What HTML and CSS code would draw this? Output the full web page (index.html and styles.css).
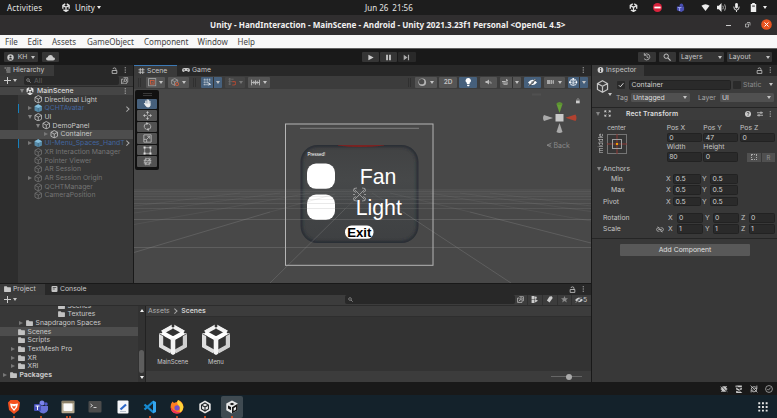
FILE: index.html
```html
<!DOCTYPE html>
<html lang="en">
<head>
<meta charset="utf-8">
<title>Unity - HandInteraction</title>
<link rel="stylesheet" href="styles.css">
</head>
<body>
<svg class="defs" width="0" height="0">
  <symbol id="cube" viewBox="0 0 16 16"><path d="M8 1l6.2 3.3v7.4L8 15l-6.200-3.300V4.300zM1.800 4.300L8 7.700l6.200-3.400M8 7.700V15" fill="none" stroke="currentColor" stroke-width="1.500"/></symbol>
  <symbol id="prefab" viewBox="0 0 16 16"><path d="M8 .5l7 3.500v8L8 15.500 1 12V4z" fill="#568aa8"/><path d="M8 .5l7 3.500-7 3.500L1 4z" fill="#86bfdc"/><path d="M8 7.500V15.500" stroke="#315469"/></symbol>
  <symbol id="unity" viewBox="0 0 28 31"><path d="M11.500 2.800L3 7.900V20M16.500 2.800L25 7.900V20M5 24l9 5 9-5M4 9l10 6 10-6M14 15v13" fill="none" stroke="currentColor" stroke-width="4.600"/></symbol>
  <symbol id="unitybig" viewBox="0 0 28 31">
    <clipPath id="hex"><path d="M14 0l14 7.750v15.500L14 31 0 23.250V7.750z"/></clipPath>
    <g clip-path="url(#hex)" fill="none" stroke-width="4.200">
      <path d="M2.100 9V22.200L12 27.900" stroke="#dedede"/>
      <path d="M25.900 9V22.200L16 27.900" stroke="#cfcfcf"/>
      <path d="M11.600 0V3.400L3 8.200M16.400 0V3.400L25 8.200" stroke="#f2f2f2"/>
      <path d="M3.500 8.800L14 14.700l10.500-5.900" stroke="#fff"/>
      <path d="M14 14V31" stroke="#f4f4f4" stroke-width="4.600"/>
      <path d="M0 9.500l5.500 3.200M28 9.500l-5.500 3.200" stroke="#333" stroke-width=".7"/>
    </g>
    <path d="M12.700 0h2.600v3h-2.600z" fill="#333"/>
  </symbol>
  <symbol id="folder" viewBox="0 0 16 14"><path fill="currentColor" d="M0 1.500Q0 .5 1 .5h5l2 2.300h7q1 0 1 1V13q0 .8-1 .8H1q-1 0-1-.8z"/></symbol>
  <symbol id="lock" viewBox="0 0 12 12"><path d="M2 6h8v5H2zM3.500 3.500q0-2 2.500-2T8.500 4v2" fill="none" stroke="currentColor" stroke-width="1.400"/></symbol>
  <symbol id="dots" viewBox="0 0 4 12"><path fill="currentColor" d="M1 .5h2v2H1zM1 5h2v2H1zM1 9.500h2v2H1z"/></symbol>
  <symbol id="search" viewBox="0 0 12 12"><circle cx="4.800" cy="4.800" r="3.300" fill="none" stroke="currentColor" stroke-width="1.400"/><path d="M7.300 7.300l4 4" stroke="currentColor" stroke-width="1.700"/></symbol>
  <symbol id="popout" viewBox="0 0 12 12"><path d="M4 1.200H11v7H8.500M3.500 3.500H1v7.500h7.500V9" fill="none" stroke="currentColor" stroke-width="1.200"/><circle cx="7" cy="5" r="2" fill="none" stroke="currentColor" stroke-width="1.200"/><path d="M5.500 6.500L3 9" stroke="currentColor" stroke-width="1.300"/></symbol>
  <symbol id="lines" viewBox="0 0 12 12"><path d="M0 2h3M4 2h8M3 6h9M4 10h8" stroke="currentColor" stroke-width="1.500"/></symbol>
  <symbol id="hash" viewBox="0 0 12 12"><path d="M3.500 0v12M8.500 0v12M0 3.500h12M0 8.500h12" stroke="currentColor" stroke-width="1.700"/></symbol>
  <symbol id="pad" viewBox="0 0 16 10"><path fill="currentColor" d="M4.500 1h7Q16 1 16 5.500 15.500 9 13 9q-1.500 0-2.500-2h-5Q4.500 9 3 9 .5 9 0 5.500 0 1 4.500 1z"/><path d="M3 4.500h3M4.500 3v3" stroke="#282828"/><circle cx="11.500" cy="4.500" r="1.200" fill="#282828"/></symbol>
  <symbol id="pivot" viewBox="0 0 14 14"><rect x="1" y="1" width="12" height="12" fill="none" stroke="#aaa" stroke-width="1.400"/><rect x="4" y="4" width="6" height="6" fill="none" stroke="#d25c3d" stroke-width="1.400"/><circle cx="7" cy="7" r="1" fill="#d25c3d"/></symbol>
  <symbol id="local" viewBox="0 0 14 14"><path d="M6 1l5 2.500v6L6 12 1 9.500v-6zM1 3.500L6 6l5-2.500M6 6v6" fill="none" stroke="#aaa" stroke-width="1.200"/><circle cx="10" cy="10" r="2.600" fill="#585858" stroke="#d25c3d" stroke-width="1.500"/></symbol>
  <symbol id="gridsnap" viewBox="0 0 14 14"><path d="M1 3h12M1 7h8M1 11h6M3 1v12M7 1v12M11 1v5" stroke="#d5dce3" stroke-width="1.200" stroke-dasharray="2 1"/><path d="M9 7v6l2-2h3z" fill="#e5e9ed"/></symbol>
  <symbol id="magnet" viewBox="0 0 14 14"><path d="M1 2h8M1 6h5M1 10h4M3 0v12" stroke="#858585" stroke-width="1.200" stroke-dasharray="2 1"/><path d="M7 6h3q3 0 3 2.500T10 11.500H7" fill="none" stroke="#ac4934" stroke-width="1.800"/></symbol>
  <symbol id="ruler" viewBox="0 0 16 12"><path d="M1 1v10M15 1v10M1 6h14M5 3v6M8 2v8M11 3v6" stroke="#bbb" stroke-width="1.700"/></symbol>
  <symbol id="ball" viewBox="0 0 14 14"><circle cx="7" cy="7" r="6.300" fill="#b4b4b4"/><circle cx="6" cy="6" r="4.400" fill="#4b4b4b"/></symbol>
  <symbol id="bulb" viewBox="0 0 12 14"><path fill="#fff" d="M6 0a4.300 4.300 0 0 1 2.300 8v2H3.700V8A4.300 4.300 0 0 1 6 0zM4 11h4v1.500L7 14H5l-1-1.500z"/></symbol>
  <symbol id="mute" viewBox="0 0 14 12"><path fill="#bbb" d="M1 4h3l4-3v10L4 8H1z"/><path d="M10 4v4M12 6v4" stroke="#bbb" stroke-width="1.300"/></symbol>
  <symbol id="fx" viewBox="0 0 14 12"><path d="M0 5h7l5-3M1 8h11M3 10.500h8M9 0l1 5" fill="none" stroke="#bbb" stroke-width="2"/></symbol>
  <symbol id="eyeoff" viewBox="0 0 16 12"><path d="M0 6q8-10 16 0-8 9-16 0z" fill="currentColor"/><circle cx="8" cy="6" r="2.200" fill="#46607c"/><path d="M2 12L14 0" stroke="#333" stroke-width="2.400"/><path d="M1.500 11.500L13.500-.5" stroke="currentColor" stroke-width="1.200"/></symbol>
  <symbol id="cam" viewBox="0 0 14 10"><path fill="#aaa" d="M0 1h7v8H0zM8 1h2v8H8zM11 2l3-1v8l-3-1z"/></symbol>
  <symbol id="globe" viewBox="0 0 14 14"><circle cx="7" cy="7" r="5.500" fill="none" stroke="#dde4ea" stroke-width="1.200"/><path d="M1 7h12M7 1v12M3 3q4 4 8 0M3 11q4-4 8 0" fill="none" stroke="#dde4ea" stroke-width="1.200"/><circle cx="7" cy="1.500" r="1.500" fill="#fff"/><circle cx="1.500" cy="7" r="1.500" fill="#fff"/><circle cx="12.500" cy="7" r="1.500" fill="#fff"/></symbol>
  <symbol id="hand" viewBox="0 0 16 16"><path d="M5 9V3.500M7.500 8V1.500M10 8V2M12.300 9V4M5 11L2.500 8" stroke="#eee" stroke-width="1.900" stroke-linecap="round"/><path fill="#eee" d="M4 8h9.300v3.500Q12.500 15 9 15q-3 0-4.500-3z"/></symbol>
  <symbol id="move" viewBox="0 0 16 16"><path fill="#c4c4c4" d="M8 0l2.500 3.500h-5zM8 16l2.500-3.500h-5zM0 8l3.500-2.500v5zM16 8l-3.500-2.500v5z"/><path d="M8 3v3.500M8 9.500V13M3 8h3.500M9.500 8H13" stroke="#c4c4c4" stroke-width="1.300"/></symbol>
  <symbol id="rotate" viewBox="0 0 16 16"><path d="M2.500 10Q1 4 7 2.500M13.500 6Q15 12 9 13.500M10 3q2 .5 3 2.500M6 13q-2-.5-3-2.500" fill="none" stroke="#c4c4c4" stroke-width="1.500"/><path d="M6 0l4 3-4 2.500zM10 16l-4-3 4-2.500z" fill="#c4c4c4"/></symbol>
  <symbol id="scale" viewBox="0 0 16 16"><path d="M1.500 1.500h13v13h-13zM1.500 9.500h5v5M7 9l4.500-4.500M7.500 4H12v4.500" fill="none" stroke="#c4c4c4" stroke-width="1.400"/></symbol>
  <symbol id="rect" viewBox="0 0 16 16"><path d="M3 3h10v10H3z" fill="none" stroke="#c4c4c4" stroke-width="1.200"/><path fill="#ddd" d="M1 1h3.500v3.500H1zM11.500 1H15v3.500h-3.500zM1 11.500h3.500V15H1zM11.500 11.500H15V15h-3.500z"/></symbol>
  <symbol id="trans" viewBox="0 0 16 16"><circle cx="8" cy="8" r="5.500" fill="none" stroke="#c4c4c4" stroke-width="1.300"/><path d="M5 1v14M11 1v14M1 6h14M1 10.500h14M3 14L14 2" stroke="#c4c4c4" stroke-width="1.100"/></symbol>
  <symbol id="star" viewBox="0 0 12 12"><path fill="#888" d="M6 0l1.700 4H12L8.700 6.800 10 11.300 6 8.700l-4 2.600 1.300-4.500L0 4h4.300z"/></symbol>
  <symbol id="tag" viewBox="0 0 12 12"><path fill="#ccc" d="M6 1l4-.5 1.500 3L6 11 1.500 7.500z"/></symbol>
  <symbol id="types" viewBox="0 0 12 12"><path fill="#ccc" d="M1 0h5v5H1zM1 6h5v6H1z"/><circle cx="8" cy="3" r="2" fill="#ccc"/><path fill="#ccc" d="M7 5l5 3-5 3z"/></symbol>
  <symbol id="bug" viewBox="0 0 14 14"><path fill="#c8c8c8" d="M4 2h6l2 5-2 5H4L2 7z"/><path d="M1 3l12 9M1 7h12M2 12l3-3M12 2l-3 3" stroke="#c8c8c8" stroke-width="1.400"/><path d="M2 1l11 12" stroke="#191919" stroke-width="1.200"/></symbol>
  <symbol id="layers" viewBox="0 0 14 14"><path fill="#c8c8c8" d="M1 1h11v3H1zM2 5l5 2 5-2v3L7 10 2 8zM2 10l5 2 2-1 4 3H2z"/><path d="M2 1l11 12" stroke="#191919" stroke-width="1.200"/></symbol>
  <symbol id="nosync" viewBox="0 0 14 14"><path d="M2 8q0-5 5-5 3 0 4 2M12 6q0 6-5 6-3 0-4-2M8 6l4 0 0-5M6 9H2v4" fill="none" stroke="#c8c8c8" stroke-width="1.500"/><path d="M1 1l12 12" stroke="#c8c8c8" stroke-width="1.400"/></symbol>
  <symbol id="okring" viewBox="0 0 14 14"><circle cx="7" cy="7" r="6" fill="none" stroke="#bbb" stroke-width="1.300"/><path d="M4 7l2 2 4-4.500" fill="none" stroke="#bbb" stroke-width="1.400"/></symbol>
</svg>

<header class="topbar">
  <span class="activities">Activities</span>
  <svg class="ti u1"><use href="#unity"/></svg><span class="appname">Unity</span><i class="caret white"></i>
  <span class="clock">Jun 26&ensp;21:56</span>
  <div class="tray">
    <svg><use href="#unity"/></svg>
    <svg viewBox="0 0 10 10"><circle cx="5" cy="5" r="5" fill="#d9223c"/><path d="M1.500 5h7" stroke="#fff" stroke-width="2"/></svg>
    <svg viewBox="0 0 10 10"><circle cx="6" cy="2.500" r="2" fill="#4a50b4"/><path d="M1 4h8v4L6 10 1 8z" fill="#4a50b4"/><path d="M2 5h4M4 5v4" stroke="#9ca2ee" stroke-width="1.200"/></svg>
    <svg viewBox="0 0 10 10"><path fill="#eee" d="M.5 3Q5-.5 9.500 3L5 9z"/></svg>
    <svg viewBox="0 0 10 10"><path fill="#eee" d="M0 3h2l3-3v10L2 7H0z"/><path d="M6.500 3q1 2 0 4M8.500 1.500q2 3.500 0 7" fill="none" stroke="#bbb"/></svg>
    <svg viewBox="0 0 10 10"><rect x="3.500" width="3" height="6" rx="1.500" fill="#eee"/><path d="M2 4q0 4 3 4t3-4M5 8v2" fill="none" stroke="#eee"/></svg>
    <svg viewBox="0 0 10 10"><path fill="#eee" d="M3.500 0h3v1H8v9H2V1h1.500z"/><path d="M3.500 2.500h3v2h-3z" fill="#777"/></svg>
    <i class="caret white"></i>
  </div>
</header>

<div class="titlebar">
  <span class="title">Unity - HandInteraction - MainScene - Android - Unity 2021.3.23f1 Personal &lt;OpenGL 4.5&gt;</span>
  <svg class="winbtns" viewBox="0 0 52 14"><path d="M1 7.500h5" stroke="#ccc"/><path d="M20.500 6h3v3h-3zM22 4.500h3v3" fill="none" stroke="#bbb" stroke-width=".8"/><circle cx="41.500" cy="6.500" r="5.300" fill="#e95420"/><path d="M39.500 4.500l4 4M43.500 4.500l-4 4" stroke="#fff"/></svg>
</div>

<nav class="menubar"><span>File</span><span>Edit</span><span>Assets</span><span>GameObject</span><span>Component</span><span>Window</span><span>Help</span></nav>

<div class="toolbar">
  <div class="tb account"><svg viewBox="0 0 12 12"><circle cx="6" cy="6" r="5.500" fill="#ccc"/><circle cx="6" cy="4.300" r="1.800" fill="#333"/><path d="M2.700 9.500q3.300-5 6.600 0z" fill="#333"/></svg><span>KH</span><i class="caret"></i></div>
  <div class="tb cloud"><svg viewBox="0 0 14 10"><path fill="#ccc" d="M3 9.500Q0 9.300 0 7t2.500-2.500Q3.500 1 7 1t4 3.500q3 0 3 2.500t-3 2.500z"/></svg></div>
  <div class="play"><div class="tb"><svg viewBox="0 0 10 10"><path fill="#ccc" d="M2 1l7.500 4L2 9z"/></svg></div><div class="tb"><svg viewBox="0 0 10 10"><path fill="#bbb" d="M1.500 1h2.800v8H1.500zM5.700 1h2.800v8H5.700z"/></svg></div><div class="tb dim"><svg viewBox="0 0 10 10"><path fill="#aaa" d="M1 1l5.500 4L1 9zM7 1h1.700v8H7z"/></svg></div></div>
  <div class="tbright">
    <div class="tb ic"><svg viewBox="0 0 12 12"><path d="M2 3q3-3.500 7-.5 3 4-.5 7-4 2.500-7-1M2 0v3.500h3M6 3.500v3l2.500 1" fill="none" stroke="#bbb" stroke-width="1.200"/></svg></div>
    <div class="tb ic"><svg class="g"><use href="#search"/></svg></div>
    <div class="tb drop">Layers<i class="caret"></i></div>
    <div class="tb drop">Layout<i class="caret"></i></div>
  </div>
</div>

<main class="workspace">
  <div class="left">
    <div class="upper">
      <section class="hierarchy">
        <div class="tabs"><div class="tab"><svg><use href="#lines"/></svg>Hierarchy</div><div class="tabend"><svg class="lk"><use href="#lock"/></svg><svg class="dt"><use href="#dots"/></svg></div></div>
        <div class="subbar"><b class="plus"></b><i class="caret"></i><div class="search"><svg><use href="#search"/></svg>All</div><svg class="po"><use href="#popout"/></svg></div>
        <div class="tree">
          <div class="row main l0"><i class="open"></i><svg class="un"><use href="#unity"/></svg><span class="semi">MainScene</span><svg class="dt end"><use href="#dots"/></svg></div>
          <div class="row l1"><i></i><svg><use href="#cube"/></svg><span>Directional Light</span></div>
          <div class="row l1 blue"><i class="closed"></i><svg><use href="#prefab"/></svg><span>QCHTAvatar</span><em class="chev"></em></div>
          <div class="row l1"><i class="open"></i><svg><use href="#cube"/></svg><span>UI</span></div>
          <div class="row l2"><i class="open"></i><svg><use href="#cube"/></svg><span>DemoPanel</span></div>
          <div class="row l3 sel"><i class="closed"></i><svg><use href="#cube"/></svg><span>Container</span></div>
          <div class="row l1 blue"><i class="closed"></i><svg><use href="#prefab"/></svg><span>UI-Menu_Spaces_HandT</span><em class="chev"></em></div>
          <div class="row l1 off"><i></i><svg><use href="#cube"/></svg><span>XR Interaction Manager</span></div>
          <div class="row l1 off"><i></i><svg><use href="#cube"/></svg><span>Pointer Viewer</span></div>
          <div class="row l1 off"><i></i><svg><use href="#cube"/></svg><span>AR Session</span></div>
          <div class="row l1 off"><i class="closed"></i><svg><use href="#cube"/></svg><span>AR Session Origin</span></div>
          <div class="row l1 off"><i></i><svg><use href="#cube"/></svg><span>QCHTManager</span></div>
          <div class="row l1 off"><i></i><svg><use href="#cube"/></svg><span>CameraPosition</span></div>
        </div>
      </section>
      <section class="scene">
        <div class="tabs"><div class="tab active"><svg><use href="#hash"/></svg>Scene</div><div class="tab plain"><svg class="wide"><use href="#pad"/></svg>Game</div><div class="tabend"><svg class="dt"><use href="#dots"/></svg></div></div>
        <div class="scenebar">
          <div class="tools">
            <u class="grip"></u>
            <div class="sb w19"><svg><use href="#pivot"/></svg><i class="caret"></i></div>
            <div class="sb w21"><svg><use href="#local"/></svg><i class="caret"></i></div>
            <u class="grip"></u>
            <div class="sb on w21"><svg><use href="#gridsnap"/></svg><s></s><i class="caret"></i></div>
            <div class="sb w20 faint"><svg><use href="#magnet"/></svg><i class="caret"></i></div>
            <div class="sb w22"><svg class="wd"><use href="#ruler"/></svg><i class="caret"></i></div>
          </div>
          <div class="tools tight">
            <u class="grip"></u>
            <div class="sb w22"><svg><use href="#ball"/></svg><i class="caret"></i></div>
            <div class="sb w18 two">2D</div>
            <div class="sb on w18"><svg><use href="#bulb"/></svg></div>
            <div class="sb w18"><svg class="sm"><use href="#mute"/></svg></div>
            <div class="sb w21"><svg class="sm"><use href="#fx"/></svg><s></s><i class="caret"></i></div>
            <div class="sb on w18 white"><svg class="wd"><use href="#eyeoff"/></svg></div>
            <div class="sb w21"><svg class="sm"><use href="#cam"/></svg><i class="caret"></i></div>
            <div class="sb on w20"><svg><use href="#globe"/></svg><s></s><i class="caret"></i></div>
          </div>
        </div>
        <div class="viewport">
          <svg class="view" viewBox="134 89 457 194">
            <defs>
              <linearGradient id="hz" x1="0" y1="0" x2="0" y2="1"><stop offset="0" stop-color="#fff" stop-opacity=".04"/><stop offset="1" stop-color="#fff" stop-opacity="0"/></linearGradient>
              <linearGradient id="pn" x1="0" y1="0" x2="0" y2="1"><stop offset="0" stop-color="#414243"/><stop offset=".35" stop-color="#464849"/><stop offset="1" stop-color="#3e4042"/></linearGradient>
              <filter id="soft" x="-10%" y="-10%" width="120%" height="120%"><feGaussianBlur stdDeviation="1.500"/></filter>
              <filter id="glow" x="-10%" y="-200%" width="120%" height="500%"><feGaussianBlur stdDeviation=".7"/></filter>
              <clipPath id="pc"><rect x="300.500" y="145" width="118" height="98" rx="17"/></clipPath>
            </defs>
            <g clip-path="url(#pc)">
              <rect x="300.500" y="145" width="118" height="98" fill="url(#pn)"/>
              <rect x="300.500" y="145" width="118" height="98" rx="17" fill="none" stroke="#262a33" stroke-width="4" filter="url(#soft)"/>
              <path d="M338 144.500q21 3 46 0" fill="none" stroke="#7a2320" stroke-width="1.800" filter="url(#glow)"/>
            </g>
            <rect x="307" y="163.500" width="28" height="25.300" rx="9" fill="#fff"/>
            <rect x="307" y="194.500" width="28" height="25.500" rx="9" fill="#fff"/>
            <rect x="345" y="225.500" width="28.500" height="13.300" rx="6.500" fill="#fff"/>
            <rect x="134" y="189" width="457" height="22" fill="url(#hz)"/>
            <g fill="none" stroke="#8f8f8f" stroke-opacity=".18" stroke-width=".8">
              <path d="M134 191.500h457M134 194h457M134 196.500h457M134 199.500h457"/>
              <path stroke-opacity=".25" d="M134 203.500h457M134 208.500h457"/>
              <path stroke-opacity=".4" d="M134 219.500h457M134 247.500h457"/>
              <path stroke-opacity=".4" d="M270 283L345 209M511 283L403 212M134 252.500L270 212M591 243L470 212"/>
              <path d="M345 209L362 193M403 212L372 193M270 212L335 194M470 212L390 193M134 224.500L310 193M591 221L430 193M134 213L280 193M591 211.500L460 193M134 206L240 193M591 206L490 193"/>
            </g>
            <rect x="285.500" y="124" width="147.500" height="141.300" fill="none" stroke="#b5b5b5"/>
            <path d="M300 128.300h119" stroke="#858585" stroke-width=".9"/>
            <g class="uitext"><text x="307.500" y="156" class="pressed">Pressed!</text><text x="359.700" y="184" class="big">Fan</text><text x="355.700" y="215" class="big">Light</text><text x="347.200" y="236.500" class="exit">Exit</text></g>
            <g fill="none" stroke="#aaa" stroke-width=".8"><path d="M354.500 189.500l10 10M364.500 189.500l-10 10M353 194.500h2M364 194.500h2M357 188l-3 .5-.5 2.500 2.500 1.500M362 188l3 .5.5 2.500-2.500 1.500M357 201l-3-.5-.5-2.500 2.500-1.500M362 201l3-.5.5-2.500-2.500-1.500"/></g>
            <path fill="#669f37" d="M556.500 104q3-3.500 6 0l-3 9z"/><ellipse cx="559.500" cy="103.800" rx="3" ry="1.300" fill="#5b9130"/>
            <path fill="#aaa" d="M544 115q-2 3 0 6l9-3z"/><path fill="#b24230" d="M575.500 114.500q2 3.500 0 6.500l-10-3.300z"/><path fill="#aaa" d="M556.500 132q3 2 6 0l-3-9z"/><path fill="#c9c9c9" d="M555.500 114h8v7.500h-8z"/>
            <path fill="#ccc" d="M576 100.500h3.700v2.800H576z"/><path d="M576.800 100.500q0-2 1.200-2t1.200 2" fill="none" stroke="#aaa" stroke-width=".6"/>
            <path d="M551.500 143l-4.500 2.200 4.500 2.200M547 145.200h4" fill="none" stroke="#8a8a8a" stroke-width=".8"/>
            <text x="553.500" y="147.800" class="back">Back</text>
            <path d="M532 94.500h9" stroke="#505050" stroke-width="2"/>
          </svg>
          <div class="palette"><b></b><div class="pt on"><svg><use href="#hand"/></svg></div><div class="pt"><svg><use href="#move"/></svg></div><div class="pt"><svg><use href="#rotate"/></svg></div><div class="pt"><svg><use href="#scale"/></svg></div><div class="pt"><svg><use href="#rect"/></svg></div><div class="pt"><svg><use href="#trans"/></svg></div></div>
        </div>
      </section>
    </div>
    <section class="project">
      <div class="tabs"><div class="tab"><svg><use href="#folder"/></svg>Project</div><div class="tab plain con"><svg viewBox="0 0 12 12"><rect width="12" height="12" rx="2" fill="#c4c4c4"/><path d="M2.500 3h7M2.500 6h4" stroke="#333" stroke-width="1.400"/></svg>Console</div><div class="tabend"><svg class="lk"><use href="#lock"/></svg><svg class="dt"><use href="#dots"/></svg></div></div>
      <div class="subbar"><b class="plus"></b><i class="caret"></i><div class="search psearch"><svg><use href="#search"/></svg></div>
        <div class="filters"><div><svg><use href="#popout"/></svg></div><div><svg><use href="#types"/></svg></div><div><svg><use href="#tag"/></svg></div><div><svg><use href="#star"/></svg></div><div class="hid"><svg class="wd"><use href="#eyeoff"/></svg>5</div></div></div>
      <div class="pbody">
        <div class="ptree">
          <div class="row p6 cut"><i></i><svg><use href="#folder"/></svg><span>Scenes</span></div>
          <div class="row p6"><i></i><svg><use href="#folder"/></svg><span>Textures</span></div>
          <div class="row p2"><i class="closed"></i><svg><use href="#folder"/></svg><span>Snapdragon Spaces</span></div>
          <div class="row p1 sel"><i></i><svg><use href="#folder"/></svg><span>Scenes</span></div>
          <div class="row p1"><i></i><svg><use href="#folder"/></svg><span>Scripts</span></div>
          <div class="row p1"><i class="closed"></i><svg><use href="#folder"/></svg><span>TextMesh Pro</span></div>
          <div class="row p1"><i class="closed"></i><svg><use href="#folder"/></svg><span>XR</span></div>
          <div class="row p1"><i class="closed"></i><svg><use href="#folder"/></svg><span>XRI</span></div>
          <div class="row p0"><i class="closed"></i><svg><use href="#folder"/></svg><span class="bold">Packages</span></div>
        </div>
        <div class="scroll"><i class="up"></i><b></b><i class="caret white"></i></div>
        <div class="assets">
          <div class="crumbs">Assets<em class="chev"></em><b>Scenes</b></div>
          <div class="grid"><figure><svg><use href="#unitybig"/></svg><figcaption>MainScene</figcaption></figure><figure><svg><use href="#unitybig"/></svg><figcaption>Menu</figcaption></figure></div>
          <div class="foot"><div class="slider"><b></b></div></div>
        </div>
      </div>
    </section>
  </div>
  <aside class="inspector">
    <div class="tabs"><div class="tab"><svg viewBox="0 0 12 12"><circle cx="6" cy="6" r="5.800" fill="#ccc"/><path d="M6 2v2M6 5v5" stroke="#333" stroke-width="1.800"/></svg>Inspector</div><div class="tabend"><svg class="lk"><use href="#lock"/></svg><svg class="dt"><use href="#dots"/></svg></div></div>
    <div class="head">
      <svg class="bigcube"><use href="#cube"/></svg><i class="caret hc"></i>
      <div class="hrows">
        <div class="h1"><div class="check"><svg viewBox="0 0 10 10"><path d="M1.500 5.500l2.500 2.500 5-6" fill="none" stroke="#ddd" stroke-width="1.600"/></svg></div><div class="field name">Container</div><div class="check"></div><span class="static">Static</span><i class="caret"></i></div>
        <div class="h2"><span>Tag</span><div class="dd tagd">Untagged<i class="caret"></i></div><span class="lay">Layer</span><div class="dd layd">UI<i class="caret"></i></div></div>
      </div>
    </div>
    <div class="comp"><i class="open"></i><svg class="rt" viewBox="0 0 12 12"><path d="M1 1l3 3M11 1L8 4M1 11l3-3M11 11L8 8M0 3h3V0M12 3H9V0M0 9h3v3M12 9H9v3" fill="none" stroke="#ccc" stroke-width="1.500"/></svg><b>Rect Transform</b>
      <svg class="help" viewBox="0 0 12 12"><circle cx="6" cy="6" r="6" fill="#d0d0d0"/><path d="M4 4.500q0-2 2-2t2 2q0 1-2 2v1M6 8.500v1.500" fill="none" stroke="#333" stroke-width="1.500"/></svg>
      <svg class="pre" viewBox="0 0 12 12"><path d="M0 3.500h12M0 8.500h12M8 1v5M4 6v5" stroke="#ccc" stroke-width="1.600"/></svg><svg class="dt"><use href="#dots"/></svg></div>
    <div class="rectarea">
      <div class="anchor"><span class="mid">middle</span><div class="acol"><span>center</span><svg viewBox="0 0 20 20"><rect x=".5" y=".5" width="19" height="19" fill="#363636" stroke="#757575"/><path d="M0 10h20M10 0v20" stroke="#8e3834"/><rect x="5.500" y="5.500" width="9" height="9" fill="none" stroke="#a0a0a0"/><rect x="9" y="9" width="2" height="2" fill="#f0a000"/></svg></div></div>
      <div class="posgrid">
        <span>Pos X</span><span>Pos Y</span><span>Pos Z</span>
        <div class="field">0</div><div class="field">47</div><div class="field">0</div>
        <span>Width</span><span>Height</span><span></span>
        <div class="field">80</div><div class="field">0</div><div class="raw"><div><u></u></div><div>R</div></div>
      </div>
    </div>
    <div class="line fold"><i class="open"></i>Anchors</div>
    <div class="line xy ind"><label>Min</label><span>X</span><div class="field">0.5</div><span>Y</span><div class="field">0.5</div></div>
    <div class="line xy ind"><label>Max</label><span>X</span><div class="field">0.5</div><span>Y</span><div class="field">0.5</div></div>
    <div class="line xy piv"><label>Pivot</label><span>X</span><div class="field">0.5</div><span>Y</span><div class="field">0.5</div></div>
    <div class="line xyz rot"><label>Rotation</label><span>X</span><div class="field">0</div><span>Y</span><div class="field">0</div><span>Z</span><div class="field">0</div></div>
    <div class="line xyz"><label>Scale<svg viewBox="0 0 14 12"><path d="M6 3H4Q1 3 1 6t3 3h2M8 3h2q3 0 3 3t-3 3H8M4 6h6M3 1l8 10" fill="none" stroke="#bbb" stroke-width="1.300"/></svg></label><span>X</span><div class="field">1</div><span>Y</span><div class="field">1</div><span>Z</span><div class="field">1</div></div>
    <div class="addwrap"><div class="add">Add Component</div></div>
  </aside>
</main>

<footer class="status"><svg><use href="#bug"/></svg><svg><use href="#layers"/></svg><svg><use href="#nosync"/></svg><svg><use href="#okring"/></svg></footer>

<div class="dock">
  <div class="app run"><svg viewBox="0 0 14 14"><path fill="#f4501e" d="M3.500 0h7L13 2.500 12 10l-5 4-5-4-1-7.500z"/><path fill="#fff" d="M3 3.500l3 .5h2l3-.5-1 4-3 3.500-3-3.500z"/><path fill="#f4501e" d="M5 5.500l2 1 2-1-1 3H6z"/></svg></div>
  <div class="app run"><svg viewBox="0 0 14 14"><circle cx="8" cy="3" r="2.500" fill="#7b83eb"/><circle cx="12" cy="4" r="1.700" fill="#5059c9"/><path fill="#6972d8" d="M5 6h9v4q-1 3-4 3.500-4 0-5-3z"/><rect y="4" width="7" height="7" rx="1" fill="#454eb8"/><path d="M1.500 6h4M3.500 6v4" stroke="#fff"/></svg></div>
  <div class="app run2"><svg viewBox="0 0 14 14"><rect x=".5" y=".8" width="13" height="12.500" rx="1" fill="#b4a991"/><rect x="1" y="1" width="12" height="2" fill="#8b8069"/><rect x="2.500" y="3.500" width="9" height="7.500" rx="1" fill="#fafafa"/></svg></div>
  <div class="app"><svg viewBox="0 0 14 14"><rect x=".5" y="1" width="13" height="11.500" rx="1" fill="#4c4c4c"/><path d="M2.500 4l2 1.500-2 1.500M5.500 7.500h3" fill="none" stroke="#ddd" stroke-width=".9"/></svg></div>
  <div class="app"><svg viewBox="0 0 14 14"><rect x="1.500" y=".5" width="11" height="13" rx="1" fill="#f5f7fa"/><path d="M4.500 9.500L10 4.500" stroke="#2e69c9" stroke-width="2.200"/><path d="M4 11.500h6" stroke="#b9c3ce"/></svg></div>
  <div class="app run"><svg viewBox="0 0 14 14"><path d="M10.500 1.500L1.500 9.500M1.500 4.500l9 8" stroke="#168bd2" stroke-width="2.300"/><path fill="#35a6ef" d="M10 .5l3 1.500v10l-3 1.500z"/></svg></div>
  <div class="app run"><svg viewBox="0 0 14 14"><path fill="#ff7d20" d="M1 4l1.500-2.500L4 3q2-1 3-1 0-1 1.500-2 4.700 2 5 7-.5 6-6.500 6.500Q.8 13 .6 7z"/><path fill="#ffd339" d="M8 0q5 3 5.300 7-.3 4-4 6 2-5-1-8-2-2-.3-5z"/><path fill="#f0315c" d="M.8 7Q1 11 4 13q5 1.500 7.500-1-4 1-6-1-3-1-4.700-4z"/><circle cx="7" cy="7.800" r="2.600" fill="#7451c9"/></svg></div>
  <div class="app run"><svg viewBox="0 0 14 14"><path fill="#e9e9e9" d="M7 .5l5.700 3.200v6.600L7 13.500l-5.700-3.200V3.700z"/><path d="M7 3l3.500 2v4L7 11 3.500 9V5zM3.500 5L7 7l3.500-2M7 7v4" fill="none" stroke="#202528" stroke-width="1.100"/></svg></div>
  <div class="app run cur"><svg viewBox="0 0 14 14"><path fill="#e8e8e8" d="M7 .5l5.700 3v6.700L7 13.500l-5.700-3.300V3.500z"/><path fill="#161616" d="M7 7.200l5.700-3.500v6.500L7 13.500zM3 5.500l3 1.600v3.200L3 8.600zM4.500 4L7 2.700 9.500 4 7 5.300z"/><path fill="#eee" d="M8.700 8.200l2.300-1.400v2.700l-2.300 1.400z"/></svg></div>
  <svg class="apps" viewBox="0 0 10 10"><path fill="#e6e6e6" d="M.3.300h1.900v1.900H.3zM4 .3h1.900v1.900H4zM7.700.3h1.900v1.900H7.700zM.3 4h1.900v1.900H.3zM4 4h1.900v1.900H4zM7.700 4h1.900v1.900H7.700zM.3 7.700h1.900v1.900H.3zM4 7.700h1.900v1.900H4zM7.700 7.700h1.900v1.900H7.700z"/></svg>
</div>
</body>
</html>
```
FILE: styles.css
```css
* { box-sizing: border-box; }
body { margin: 0; width: 777px; height: 418px; overflow: hidden; display: flex; flex-direction: column; background: #191919; color: #c8c8c8; font: 6.85px/8px Inter, sans-serif; white-space: nowrap; }
svg { flex: none; display: block; }
.defs { position: absolute; }
i, em { font-style: normal; }
u, s { text-decoration: none; }
.caret { width: 0; height: 0; border: 2.3px solid transparent; border-top: 3px solid #c4c4c4; border-bottom: 0; flex: none; }
.caret.white { border-top-color: #eee; }

/* desktop bar */
.topbar { height: 15px; flex: none; background: #1d1d1d; display: grid; grid-template-columns: 62px 13px 22px 268px 1fr auto; align-items: center; font: 8px/15px "Noto Sans", sans-serif; color: #e4e4e4; }
.activities { padding-left: 7px; letter-spacing: .2px; }
.ti { width: 8px; height: 9px; }
.tray { display: grid; grid-template-columns: 24px 23px 25px 16px 15px 17px 14px 14px; align-items: center; }
.tray svg { width: 9px; height: 9px; }
.titlebar { height: 20px; flex: none; background: #302e2f; display: flex; align-items: center; justify-content: space-between; padding: 0 0 0 210px; font: 700 8.120px/20px "Noto Sans", sans-serif; color: #f0f0f0; }
.winbtns { width: 52px; height: 14px; }
.menubar { height: 14px; flex: none; background: #f8f8f8; border-bottom: 1px solid #606060; color: #444; display: grid; grid-template-columns: 22.5px 24.500px 35px 57px 53.500px 40px auto; justify-content: start; padding-left: 5px; font: 8px/13px "Noto Sans", sans-serif; }

/* editor toolbar */
.toolbar { height: 16px; flex: none; display: flex; align-items: center; padding: 0 5px 0 4px; }
.tb { height: 10.500px; background: #353535; display: flex; align-items: center; justify-content: center; border-radius: 1px; }
.account { width: 34px; gap: 4px; }
.account svg { width: 7px; height: 7px; }
.cloud { width: 17px; margin-left: 4px; }
.cloud svg { width: 9px; height: 7px; }
.play { display: flex; gap: 1px; margin-left: 303px; }
.play .tb { width: 17.200px; }
.play .dim { background: #292929; }
.play svg { width: 7px; height: 7px; }
.tbright { display: flex; gap: 3px; margin-left: auto; }
.ic { width: 17.500px; }
.ic svg { width: 8px; height: 8px; }
.drop { width: 45px; justify-content: space-between; padding: 0 2px; }

/* panels */
.workspace { flex: none; height: 317px; display: flex; gap: 1.500px; }
.left { width: 590.500px; display: flex; flex-direction: column; gap: 1px; }
.upper { height: 218px; display: flex; gap: 1.500px; }
.tabs { height: 10.500px; flex: none; background: #282828; display: flex; }
.tab { background: #3a3a3a; display: flex; align-items: center; gap: 2px; padding: 0 10px 0 4px; }
.tab svg { width: 7px; height: 6px; }
.tab .wide { width: 8px; height: 6px; }
.tab.plain { background: none; }
.tabend { margin-left: auto; display: flex; align-items: center; gap: 6px; padding-right: 6px; }
.lk { width: 7px; height: 7px; }
.dt { width: 2.500px; height: 6px; }
.subbar { height: 11px; flex: none; background: #3c3c3c; display: flex; align-items: center; border-bottom: 1px solid #2c2c2c; padding-left: 4px; }
.plus { width: 7px; height: 7px; margin-right: 2px; background: linear-gradient(#ccc, #ccc) center / 7px 1.300px no-repeat, linear-gradient(#ccc, #ccc) center / 1.300px 7px no-repeat; }
.search { height: 8.500px; background: #282828; border-radius: 2px; color: #606060; display: flex; align-items: center; gap: 3px; padding-left: 2px; }
.search svg { width: 5px; height: 5px; color: #aaa; }

.hierarchy { width: 132.500px; background: #383838; }
.hierarchy .tab { width: 54px; }
.hierarchy .search { width: 95px; margin-left: 7px; }
.po { width: 7.500px; height: 7.500px; margin-left: 2px; }
.tree { height: 196.500px; background: linear-gradient(90deg, #2d2d2d 18px, #383838 18px); }
.row { height: 8.720px; display: flex; align-items: center; color: #c8c8c8; }
.row > i { flex: none; display: flex; width: 8px; justify-content: center; }
.open::before { content: ""; border: 2px solid transparent; border-top: 4px solid #858585; border-bottom: 0; }
.closed::before { content: ""; border: 2px solid transparent; border-left: 4px solid #777; border-right: 0; }
.row > svg { width: 8.500px; height: 8.500px; margin-right: 2px; }
.row .un { width: 8px; height: 8px; color: #eee; margin-right: 3px; }
.l0 { padding-left: 18px; }
.l1 { padding-left: 26px; }
.l2 { padding-left: 34px; }
.l3 { padding-left: 42px; }
.row.main { background: #454545; }
.semi { font-weight: 500; color: #ddd; }
.row .end { width: 2.500px; height: 6px; margin: 0 6px 0 auto; }
.row.blue { color: #42659f; background: linear-gradient(#1680bd, #1680bd) 18px 0 / 1px 100% no-repeat; }
.row.off { color: #747474; }
.sel { background: #4d4d4d; }
.chev { width: 3.500px; height: 3.500px; border: solid #aaa; border-width: 1px 1px 0 0; transform: rotate(45deg); }
.row .chev { margin: 0 4px 0 auto; }

.scene { width: 456.500px; display: flex; flex-direction: column; }
.scene .tab.active { width: 43px; border-top: 1px solid #3c79b5; }
.scene .plain { padding-left: 5px; }
.scenebar { height: 13.500px; flex: none; background: #3c3c3c; display: flex; justify-content: space-between; padding: 0 3px; }
.tools { display: flex; align-items: center; gap: 3px; }
.tools.tight { gap: 2.600px; }
.grip { width: 3px; height: 9px; border: solid #303030; border-width: 0 1px; margin: 0 2px 0 1px; }
.sb { height: 11px; background: #555; border-radius: 1px; color: #c4c4c4; display: flex; align-items: center; justify-content: space-evenly; }
.sb svg { width: 8.500px; height: 8.500px; }
.sb svg.sm { width: 7px; height: 6px; }
.sb svg.wd { width: 9px; height: 7px; }
.sb.on { background: #46607c; }
.sb.white { color: #fff; }
.sb.faint { background: #454545; }
.sb.faint .caret { border-top-color: #777; }
.sb s { width: 1px; height: 11px; background: #333; }
.w18 { width: 17.700px; }
.w19 { width: 19px; }
.w20 { width: 20px; }
.w21 { width: 21px; }
.w22 { width: 21.500px; }
.two { font-size: 6.500px; font-weight: 600; }
.viewport { position: relative; height: 194px; background: #484848; }
.view { width: 457px; height: 194px; }
.uitext { font-family: "Liberation Sans", sans-serif; fill: #fff; }
.big { font-size: 21.300px; }
.pressed { font-size: 4.500px; }
.exit { font-size: 13.200px; font-weight: 700; fill: #000; }
.back { font-size: 7px; fill: #888; }
.palette { position: absolute; left: 1px; top: 1px; width: 24px; height: 79.500px; background: #111; border-radius: 2px; padding: 2.500px 2px 2px; display: flex; flex-direction: column; align-items: center; gap: 1px; }
.palette b { width: 9px; height: 3px; border: solid #383838; border-width: 1px 0; margin-bottom: 2px; }
.pt { width: 20.500px; height: 10.600px; background: #525252; display: flex; align-items: center; justify-content: center; border-radius: 1px; }
.pt.on { background: #46607c; }
.pt svg { width: 9px; height: 9px; }

/* project browser */
.project { height: 98px; background: #383838; display: flex; flex-direction: column; }
.project .tab { width: 45px; }
.project .tab.con { width: 60px; padding-left: 6px; }
.psearch { width: 171px; margin-left: 328px; padding-left: 3px; }
.filters { display: grid; grid-template-columns: 13px 15px 15px 14px 19px; height: 100%; }
.filters > div { display: flex; align-items: center; justify-content: center; border-right: 1px solid #303030; }
.filters svg { width: 7px; height: 7px; }
.filters .wd { width: 8px; height: 6px; color: #ccc; }
.filters .hid { border: 0; }
.pbody { flex: 1; min-height: 0; display: flex; }
.ptree { width: 138px; overflow: hidden; }
.ptree .row { height: 8.670px; }
.ptree .cut { margin-top: -4px; }
.ptree .row > i { width: 10px; }
.ptree .row > svg { width: 7px; height: 6px; margin-right: 2.500px; color: #c2c2c2; }
.p1 { padding-left: 8px; }
.p2 { padding-left: 16px; }
.p6 { padding-left: 48px; }
.bold { font-weight: 700; }
.scroll { width: 8px; background: #323232; border-right: 1.500px solid #222; display: flex; flex-direction: column; align-items: center; padding: 3px 0; }
.scroll .up { border: 2px solid transparent; border-bottom: 3px solid #eee; border-top: 0; }
.scroll b { width: 5px; height: 23px; border-radius: 2.500px; background: #5d5d5d; margin: auto 0 3px; }
.assets { flex: 1; display: flex; flex-direction: column; background: #333; }
.crumbs { height: 11px; background: #3c3c3c; border-bottom: 1px solid #2e2e2e; display: flex; align-items: center; gap: 3px; padding: 1px 0 0 2px; color: #b0b0b0; }
.crumbs b { color: #d0d0d0; font-weight: 600; }
.crumbs .chev { margin: 0 2px 0 0; }
.grid { flex: 1; display: flex; padding: 7px 0 0 5px; }
.grid figure { margin: 0; width: 43.300px; display: flex; flex-direction: column; align-items: center; gap: 3.500px; }
.grid svg { width: 28px; height: 31px; }
.grid figcaption { font-size: 5.900px; line-height: 7px; }
.foot { height: 11px; background: #3c3c3c; display: flex; justify-content: flex-end; align-items: center; padding-right: 9px; }
.slider { width: 31px; height: 1px; background: #666; display: flex; align-items: center; padding-left: 15px; }
.slider b { width: 6px; height: 6px; border-radius: 50%; background: #aaa; flex: none; }

/* inspector */
.inspector { flex: 1; background: #383838; color: #c4c4c4; }
.inspector .tab { width: 52px; padding-left: 5px; }
.head { height: 32px; border-bottom: 1px solid #252525; background: #3c3c3c; display: flex; }
.bigcube { width: 13px; height: 13px; margin: 4px 0 0 4px; }
.hc { margin: 17px 0 0 -1px; }
.hrows { flex: 1; display: flex; flex-direction: column; gap: 3.500px; padding: 4.500px 3px 0 0; }
.h1, .h2 { display: flex; align-items: center; height: 9.500px; }
.h1 { padding-left: 5px; }
.check { width: 8px; height: 8.500px; background: #2a2a2a; border-radius: 1px; display: flex; align-items: center; justify-content: center; }
.check svg { width: 6px; height: 6px; }
.field { height: 9.500px; background: #2a2a2a; border: .5px solid #222; border-radius: 1.500px; color: #d0d0d0; line-height: 8px; padding-left: 1.500px; }
.field.name { width: 102px; margin: 0 2px 0 4px; }
.static { margin-left: 2px; color: #8c8c8c; }
.h1 .caret { margin: 0 1px 0 auto; }
.h2 { padding-left: 4px; color: #a5a5a5; }
.dd { height: 9px; background: #505050; border-radius: 1.500px; color: #dcdcdc; display: flex; align-items: center; justify-content: space-between; padding: 0 3px 0 2px; }
.tagd { width: 59px; margin-left: 3px; }
.lay { margin-left: 8px; }
.layd { width: 54px; margin-left: auto; }
.comp { height: 12px; display: flex; align-items: center; background: #3c3c3c; padding-left: 4px; }
.comp b { font-weight: 600; color: #ddd; letter-spacing: .1px; }
.comp .rt { width: 7px; height: 7px; margin: 0 15px 0 4px; }
.help { width: 6px; height: 6px; margin-left: auto; }
.pre { width: 6px; height: 6px; margin: 0 6px; }
.comp .dt { margin-right: 6px; }
.rectarea { height: 44px; display: flex; justify-content: space-between; padding: 4.500px 2px 0 5px; }
.anchor { display: flex; font-size: 6.200px; }
.mid { writing-mode: vertical-rl; transform: rotate(180deg); height: 22px; width: 8px; margin-top: 8px; text-align: center; line-height: 8px; }
.acol { display: flex; flex-direction: column; align-items: center; gap: 2px; margin-left: 1.500px; }
.acol svg { width: 20px; height: 20px; }
.posgrid { display: grid; grid-template-columns: 35px 35px 35px; grid-template-rows: 8px 9.700px 8px 9.700px; column-gap: 1.700px; row-gap: .9px; align-content: start; align-items: center; }
.raw { display: grid; grid-template-columns: 14px 13px; gap: 1px; justify-content: end; color: #909090; font-size: 6px; text-align: center; line-height: 9px; }
.raw div { background: #505050; height: 9px; display: flex; align-items: center; justify-content: center; }
.raw u { width: 6px; height: 6px; border: 1px dotted #aaa; }
.line { height: 11px; display: flex; align-items: center; }
.fold { height: 10px; padding-left: 5px; gap: 2px; }
.inspector .open { display: flex; width: 4px; }
.xy { display: grid; grid-template-columns: 74px 7px 28px 2px 7px 28px; }
.xy > span:nth-of-type(2) { grid-column: 4 / 6; padding-left: 1px; }
.line label { padding-left: 11px; display: flex; justify-content: space-between; align-items: center; padding-right: 4px; }
.line label svg { width: 8px; height: 7px; }
.ind label { padding-left: 19px; }
.piv { height: 12px; }
.rot { height: 16px; padding-top: 5px; }
.xyz { display: grid; grid-template-columns: 76px 8.500px 26px 10px 26px 10px 26px; }
.xyz > span:not(:first-of-type) { padding-left: 2.500px; }
.addwrap { margin-top: 3px; border-top: 1px solid #252525; padding: 5px 0 0 28px; }
.add { width: 130px; height: 12px; background: #585858; border-radius: 1px; text-align: center; line-height: 12px; color: #e0e0e0; }

/* status and dock */
.status { height: 13px; flex: none; display: flex; align-items: center; justify-content: flex-end; gap: 7px; padding-right: 4px; }
.status svg { width: 8px; height: 8px; }
.dock { height: 23px; flex: none; background: #14222b; display: flex; align-items: center; gap: 5.300px; padding-left: 2.500px; }
.app { width: 22px; height: 22px; border-radius: 2px; display: flex; align-items: center; justify-content: center; position: relative; }
.app svg { width: 14px; height: 14px; }
.app.cur { background: #3f4a51; }
.run::after, .run2::after { content: ""; position: absolute; bottom: 0; left: 10px; width: 2px; height: 2px; background: #e95420; border-radius: 1px; }
.run2::after { box-shadow: 3px 0 #e95420; left: 8.500px; }
.apps { width: 10px; height: 10px; margin: 0 9px 0 auto; }
```
